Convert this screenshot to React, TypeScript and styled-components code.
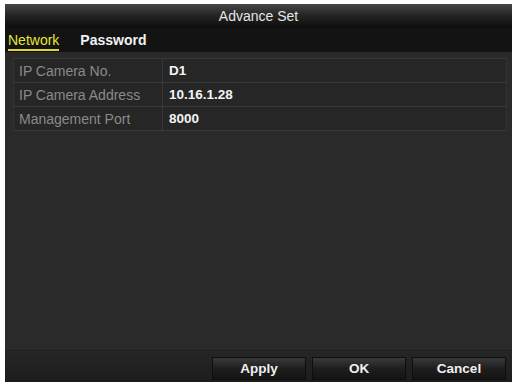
import React from "react";
import styled, { createGlobalStyle } from "styled-components";

const Global = createGlobalStyle`
  html, body {
    margin: 0;
    padding: 0;
    background: #ffffff;
  }
  body {
    font-family: "Liberation Sans", Arial, sans-serif;
  }
`;

const Window = styled.div`
  display: flex;
  flex-direction: column;
  width: 507px;
  height: 378px;
  margin: 4px 0 0 5px;
  background: #282828;
  box-sizing: border-box;
  overflow: hidden;
`;

const TitleBar = styled.div`
  height: 24px;
  display: flex;
  align-items: center;
  justify-content: center;
  background: linear-gradient(#474747 0%, #262626 45%, #0c0c0c 100%);
  color: #e6e6e6;
  font-size: 14px;
`;

const TabBar = styled.div`
  height: 24px;
  display: flex;
  align-items: flex-end;
  gap: 21px;
  padding: 0 0 1px 3px;
  box-sizing: border-box;
  background: #131313;
`;

const Tab = styled.div<{ $active?: boolean }>`
  font-size: 14px;
  font-weight: ${(p) => (p.$active ? "normal" : "bold")};
  color: ${(p) => (p.$active ? "#e4e636" : "#f2f2f2")};
  line-height: 16px;
  padding-bottom: 1px;
  border-bottom: 2px solid ${(p) => (p.$active ? "#d8d830" : "transparent")};
`;

const Content = styled.div`
  flex: 1;
  padding: 6px 5px 0 8px;
  background: #2a2a2a;
`;

const Table = styled.div`
  display: flex;
  flex-direction: column;
  border-top: 1px solid #383838;
`;

const Row = styled.div`
  display: grid;
  grid-template-columns: 149px 1fr;
  height: 23px;
  border-bottom: 1px solid #3a3a3a;
  border-left: 1px solid #333333;
  border-right: 1px solid #333333;
  background: #262626;
`;

const Label = styled.div`
  display: flex;
  align-items: center;
  padding-left: 5px;
  color: #8a8a8a;
  font-size: 14px;
  border-right: 1px solid #383838;
`;

const Value = styled.div`
  display: flex;
  align-items: center;
  padding-left: 6px;
  color: #f4f4f4;
  font-size: 13.5px;
  font-weight: bold;
`;

const Footer = styled.div`
  height: 32px;
  display: flex;
  justify-content: flex-end;
  align-items: flex-end;
  gap: 6px;
  padding: 0 6px 2px 0;
  box-sizing: border-box;
  background: linear-gradient(#262626, #1c1c1c);
  border-top: 1px solid #202020;
`;

const Button = styled.div`
  width: 94px;
  height: 23px;
  display: flex;
  align-items: center;
  justify-content: center;
  background: linear-gradient(#3a3a3a 0%, #1e1e1e 50%, #141414 100%);
  border: 1px solid #0e0e0e;
  box-sizing: border-box;
  color: #f0f0f0;
  font-size: 13.5px;
  font-weight: bold;
`;

const rows = [
  { label: "IP Camera No.", value: "D1" },
  { label: "IP Camera Address", value: "10.16.1.28" },
  { label: "Management Port", value: "8000" },
];

export default function App() {
  return (
    <>
      <Global />
      <Window>
        <TitleBar>Advance Set</TitleBar>
        <TabBar>
          <Tab $active>Network</Tab>
          <Tab>Password</Tab>
        </TabBar>
        <Content>
          <Table>
            {rows.map((r) => (
              <Row key={r.label}>
                <Label>{r.label}</Label>
                <Value>{r.value}</Value>
              </Row>
            ))}
          </Table>
        </Content>
        <Footer>
          <Button>Apply</Button>
          <Button>OK</Button>
          <Button>Cancel</Button>
        </Footer>
      </Window>
    </>
  );
}
